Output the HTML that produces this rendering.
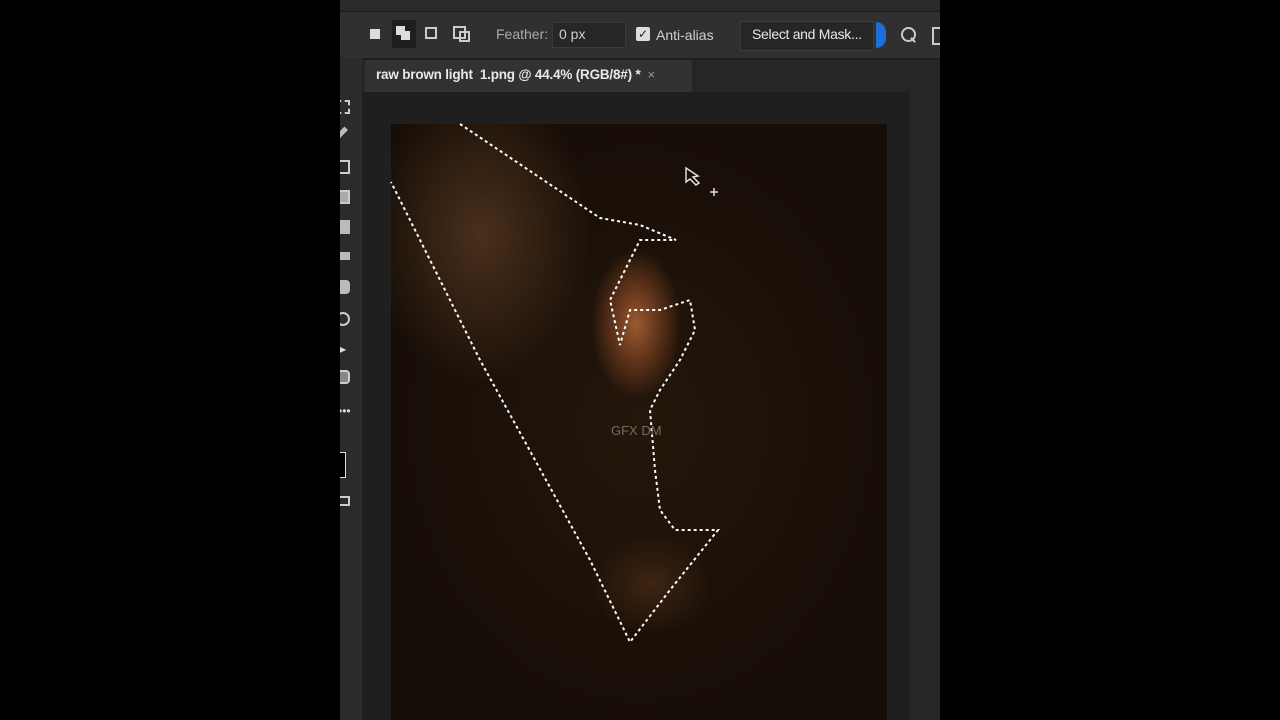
<!DOCTYPE html>
<html><head><style>
body{margin:0;width:1280px;height:720px;background:#000;position:relative;overflow:hidden;font-family:"Liberation Sans",sans-serif}
.ps{position:absolute;left:340px;top:0;width:600px;height:720px;background:#1f1f1f;overflow:hidden}
.menu{position:absolute;left:0;top:0;width:600px;height:11px;background:#2a2a2a;border-bottom:1px solid #1a1a1a}
.opt{position:absolute;left:0;top:12px;width:600px;height:46px;background:#303030}
.tabbar{position:absolute;left:22px;top:60px;width:578px;height:32px;background:#262626}
.tab{position:absolute;left:3px;top:0;width:327px;height:32px;background:#323232;color:#e8e8e8;font-size:13.5px;font-weight:bold;line-height:30px;padding-left:11px;box-sizing:border-box;letter-spacing:-0.2px}
.tools{position:absolute;left:0;top:58px;width:22px;height:662px;background:#2b2b2b}
.t{position:absolute;left:-4px;width:14px;height:14px;border:2px solid #ccc;box-sizing:border-box}
.txt{position:absolute;color:#cfcfcf;font-size:14px}
.img{position:absolute;left:51px;top:124px;width:496px;height:596px;background:
radial-gradient(ellipse 45px 75px at 245px 200px,#9a5a30,#5a3018 55%,transparent 100%),
radial-gradient(ellipse 60px 50px at 260px 460px,#3e2412,transparent),
radial-gradient(ellipse 110px 150px at 90px 110px,#4a301c,transparent),
radial-gradient(ellipse 250px 300px at 250px 300px,#24160b,#170e07)}
.rp{position:absolute;left:570px;top:92px;width:30px;height:628px;background:#262626}
</style></head><body>
<div class="ps">
<div class="menu"></div>
<div class="opt">
<div style="position:absolute;left:30px;top:17px;width:10px;height:10px;background:#ddd"></div>
<div style="position:absolute;left:52px;top:8px;width:24px;height:28px;background:#1f1f1f"></div>
<div style="position:absolute;left:56px;top:14px;width:9px;height:9px;background:#ddd"></div>
<div style="position:absolute;left:61px;top:19px;width:9px;height:9px;background:#ddd"></div>
<div style="position:absolute;left:85px;top:15px;width:8px;height:8px;border:2px solid #ccc"></div>
<div style="position:absolute;left:113px;top:14px;width:9px;height:9px;border:2px solid #ccc"></div>
<div style="position:absolute;left:119px;top:19px;width:7px;height:7px;border:2px solid #ccc"></div>
<div class="txt" style="left:156px;top:14px;color:#aaa">Feather:</div>
<div style="position:absolute;left:212px;top:10px;width:72px;height:24px;background:#262626;border:1px solid #3a3a3a"></div>
<div class="txt" style="left:219px;top:14px">0 px</div>
<div style="position:absolute;left:296px;top:15px;width:14px;height:14px;background:#ddd;border-radius:2px;color:#222;font-size:12px;line-height:14px;text-align:center">✓</div>
<div class="txt" style="left:316px;top:15px">Anti-alias</div>
<div style="position:absolute;left:400px;top:9px;width:132px;height:28px;background:#262626;border:1px solid #3a3a3a"></div>
<div class="txt" style="left:412px;top:14px;color:#e8e8e8;letter-spacing:-0.3px">Select and Mask...</div>
<div style="position:absolute;left:536px;top:10px;width:10px;height:26px;background:#1c6fd8;border-radius:0 13px 13px 0"></div>
<div style="position:absolute;left:561px;top:15px;width:11px;height:11px;border:2px solid #ccc;border-radius:50%"></div>
<div style="position:absolute;left:570px;top:27px;width:6px;height:2px;background:#ccc;transform:rotate(45deg)"></div>
<div style="position:absolute;left:592px;top:15px;width:8px;height:14px;border:2px solid #ccc"></div>
</div>
<div class="tabbar"><div class="tab">raw brown light&nbsp; 1.png @ 44.4% (RGB/8#) * <span style="color:#999;font-weight:normal;font-size:13px">&nbsp;×</span></div></div>
<div class="tools">
<div class="t" style="top:42px;border-style:dashed"></div>
<div class="t" style="top:72px;border:none;background:#bbb;width:12px;height:5px;transform:rotate(-45deg)"></div>
<div class="t" style="top:102px"></div>
<div class="t" style="top:132px;background:#aaa"></div>
<div class="t" style="top:162px;background:#bbb;border:none"></div>
<div class="t" style="top:194px;background:#bbb;border:none;height:8px"></div>
<div class="t" style="top:222px;background:#bbb;border:none;border-radius:4px"></div>
<div class="t" style="top:254px;border-radius:50%"></div>
<div class="t" style="top:284px;border:none;color:#ddd;font-size:13px">➤</div>
<div class="t" style="top:312px;border-radius:4px;background:#888"></div>
<div style="position:absolute;left:-2px;top:346px;color:#ddd;font-size:12px">•••</div>
<div style="position:absolute;left:-2px;top:394px;width:6px;height:24px;background:#000;border:1px solid #ddd"></div>
<div class="t" style="top:438px;height:10px"></div>
</div>
<div class="rp"></div>
<div class="img"></div>
<svg style="position:absolute;left:0;top:0" width="600" height="720">
<polyline fill="none" stroke="#fff" stroke-width="2" stroke-dasharray="3,3" points="120,124 260,218 300,225 336,240 300,240 285,270 270,300 280,345 290,310 320,310 350,300 355,330 340,360 320,390 310,410 315,470 320,510 335,530 378,530 330,590 290,642 250,560 140,360 51,182"/>
<text x="271" y="435" fill="#7a6a60" font-size="13" font-family="Liberation Sans">GFX DM</text>
<path d="M346,168 l0,14 l4,-3 l6,6 l3,-2 l-6,-6 l5,-1z" fill="none" stroke="#ddd" stroke-width="1.5"/>
<path d="M370,192 h8 M374,188 v8" stroke="#ddd" stroke-width="1.5"/>
</svg>
</div>
</body></html>
